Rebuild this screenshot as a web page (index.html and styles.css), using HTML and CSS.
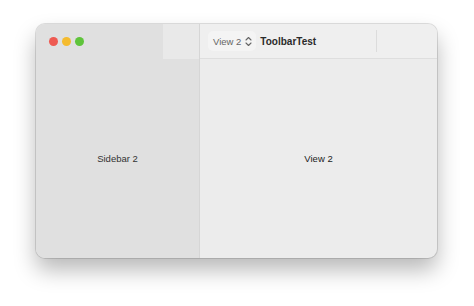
FILE: index.html
```html
<!DOCTYPE html>
<html lang="en">
<head>
    <meta charset="UTF-8">
    <title>ToolbarTest</title>
    <link rel="stylesheet" href="styles.css">
</head>
<body>
    <div class="window">
        <div class="sidebar">
            <div class="sidebar-top">
                <div class="lights">
                    <span class="light red"></span>
                    <span class="light yellow"></span>
                    <span class="light green"></span>
                </div>
                <div class="toggle-area"></div>
            </div>
            <div class="sidebar-body">Sidebar 2</div>
        </div>
        <div class="main">
            <div class="toolbar">
                <div class="popup">
                    <span>View 2</span>
                    <svg width="7" height="11" viewBox="0 0 7 11">
                        <path d="M1 4 L3.5 1.5 L6 4 M1 7 L3.5 9.5 L6 7" fill="none" stroke="#666" stroke-width="1.1" stroke-linecap="round" stroke-linejoin="round"/>
                    </svg>
                </div>
                <div class="title">ToolbarTest</div>
                <div class="sep"></div>
            </div>
            <div class="content">View 2</div>
        </div>
    </div>
</body>
</html>
```

FILE: styles.css
```css
body {
    margin: 0;
    padding: 24px 37px 48px 36px;
    background: #ffffff;
    font-family: "Liberation Sans", Arial, sans-serif;
}
.window {
    display: flex;
    width: 401px;
    height: 234px;
    border-radius: 9px;
    overflow: hidden;
    background: #ececec;
    box-shadow: 0 0 0 1px rgba(0, 0, 0, 0.12), 0 12px 22px rgba(0, 0, 0, 0.28);
}
.sidebar {
    width: 163px;
    display: flex;
    flex-direction: column;
    background: #e0e0e0;
    border-right: 1px solid #d6d6d6;
}
.sidebar-top {
    height: 35px;
    display: flex;
    justify-content: space-between;
}
.lights {
    display: flex;
    gap: 4px;
    padding: 13px 0 0 13px;
}
.light {
    width: 9px;
    height: 9px;
    border-radius: 50%;
}
.red { background: #ee5a52; }
.yellow { background: #f4bb2f; }
.green { background: #5fc43b; }
.toggle-area {
    width: 36px;
    background: #e9e9e9;
}
.sidebar-body {
    flex: 1;
    display: flex;
    align-items: center;
    justify-content: center;
    font-size: 9.5px;
    color: #333;
}
.main {
    flex: 1;
    display: flex;
    flex-direction: column;
}
.toolbar {
    height: 34px;
    display: flex;
    align-items: center;
    background: #efefef;
    border-bottom: 1px solid #dedede;
    padding-left: 8px;
}
.popup {
    display: flex;
    align-items: center;
    gap: 4px;
    height: 20px;
    padding: 0 4px 0 5px;
    border-radius: 5px;
    background: #f4f4f4;
    font-size: 9.5px;
    color: #666;
}
.title {
    margin-left: 4px;
    font-size: 10px;
    font-weight: bold;
    color: #2a2a2a;
}
.sep {
    width: 1px;
    height: 22px;
    margin-left: 60px;
    background: #dcdcdc;
}
.content {
    flex: 1;
    display: flex;
    align-items: center;
    justify-content: center;
    font-size: 9.5px;
    color: #222;
}
```
